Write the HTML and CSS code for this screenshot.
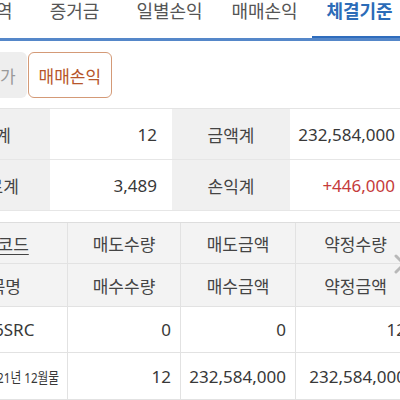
FILE: index.html
```html
<!DOCTYPE html>
<html lang="ko">
<head>
<meta charset="utf-8">
<title>체결기준</title>
<link rel="stylesheet" href="styles.css">
</head>
<body>
<div class="page">
  <nav class="tabs">
    <div class="tab">거래내역</div>
    <div class="tab">증거금</div>
    <div class="tab">일별손익</div>
    <div class="tab">매매손익</div>
    <div class="tab active">체결기준</div>
  </nav>

  <div class="filters">
    <button class="chip">잔고평가</button>
    <button class="chip active">매매손익</button>
  </div>

  <div class="summary">
    <div class="label">수량계</div>
    <div class="value">12</div>
    <div class="label">금액계</div>
    <div class="value">232,584,000</div>
    <div class="label">수수료계</div>
    <div class="value">3,489</div>
    <div class="label">손익계</div>
    <div class="value profit">+446,000</div>
  </div>

  <div class="detail">
    <div class="head"><span class="link">종목코드</span></div>
    <div class="head">매도수량</div>
    <div class="head">매도금액</div>
    <div class="head">약정수량</div>

    <div class="head">종목명</div>
    <div class="head">매수수량</div>
    <div class="head">매수금액</div>
    <div class="head">약정금액</div>

    <div class="code">6SRC</div>
    <div class="num">0</div>
    <div class="num">0</div>
    <div class="num">12</div>

    <div class="code name"><span class="squeeze">21년 12월물</span></div>
    <div class="num">12</div>
    <div class="num">232,584,000</div>
    <div class="num">232,584,000</div>
  </div>

  <svg class="more" width="14" height="20" viewBox="0 0 14 20" aria-hidden="true">
    <polyline points="2,2 10,10 2,18" fill="none" stroke="#b8b8b8" stroke-width="3" stroke-linecap="round" stroke-linejoin="round"/>
  </svg>
</div>
</body>
</html>
```

FILE: styles.css
```css
* { box-sizing: border-box; }

html, body {
  margin: 0;
  padding: 0;
  background: #ffffff;
}

body {
  width: 400px;
  height: 400px;
  overflow: hidden;
  font-family: "Noto Sans", "Noto Sans CJK KR", sans-serif;
  color: #333333;
}

.page {
  position: relative;
  width: 400px;
  height: 400px;
  overflow: hidden;
}

/* tabs */
.tabs {
  display: flex;
  margin-left: -68px;
  height: 41px;
  border-bottom: 3px solid #5587c9;
}

.tab {
  flex: 0 0 95px;
  text-align: center;
  font-size: 18px;
  line-height: 22px;
  color: #555555;
  white-space: nowrap;
}

.tab.active {
  color: #2c6cb8;
  font-weight: 700;
  box-shadow: inset 0 -2px 0 #2f6dbd;
}

/* filter chips */
.filters {
  display: flex;
  gap: 1px;
  margin-left: -58px;
  padding: 11px 0 10px;
  height: 67px;
}

.chip {
  font-family: inherit;
  font-size: 17px;
  height: 46px;
  padding: 0 10px;
  border: 1px solid transparent;
  border-radius: 6px;
  background: #eeeeee;
  color: #9a9a9a;
  white-space: nowrap;
}

.chip.active {
  background: #ffffff;
  border-color: #d49a77;
  color: #b7562b;
}

/* summary */
.summary {
  display: grid;
  grid-template-columns: 125px 122px 118px 120px;
  margin-left: -75px;
  border-top: 1px solid #e4e4e4;
}

.summary > div {
  height: 51px;
  display: flex;
  align-items: center;
  padding: 0 15px;
  font-size: 17px;
  border-bottom: 1px solid #e6e6e6;
  white-space: nowrap;
}

.summary .label {
  background: #f0f0f0;
  justify-content: center;
  color: #444444;
}

.summary .value {
  justify-content: flex-end;
  color: #383838;
}

.summary .profit {
  color: #c53b3b;
}

/* detail table */
.detail {
  display: grid;
  grid-template-columns: 140px 113px 115px 120px;
  grid-template-rows: 41px 43px 46px 47px;
  margin-left: -72px;
  margin-top: 11px;
  border-top: 1px solid #dddddd;
}

.detail > div {
  display: flex;
  align-items: center;
  padding: 0 9px;
  font-size: 17px;
  border-right: 1px solid #e2e2e2;
  border-bottom: 1px solid #e2e2e2;
  white-space: nowrap;
  overflow: hidden;
}

.detail .head {
  background: #f3f3f3;
  justify-content: center;
  color: #444444;
}

.detail .link {
  text-decoration: underline;
  text-underline-offset: 3px;
}

.detail .num {
  justify-content: flex-end;
  color: #383838;
}

.detail .code {
  justify-content: flex-start;
  padding-left: 66px;
  color: #383838;
}

.detail .name {
  padding-left: 69px;
  font-size: 15px;
}

.squeeze {
  display: inline-block;
  transform: scaleX(0.78);
  transform-origin: left center;
}

.more {
  position: absolute;
  left: 394px;
  top: 254px;
}
```
